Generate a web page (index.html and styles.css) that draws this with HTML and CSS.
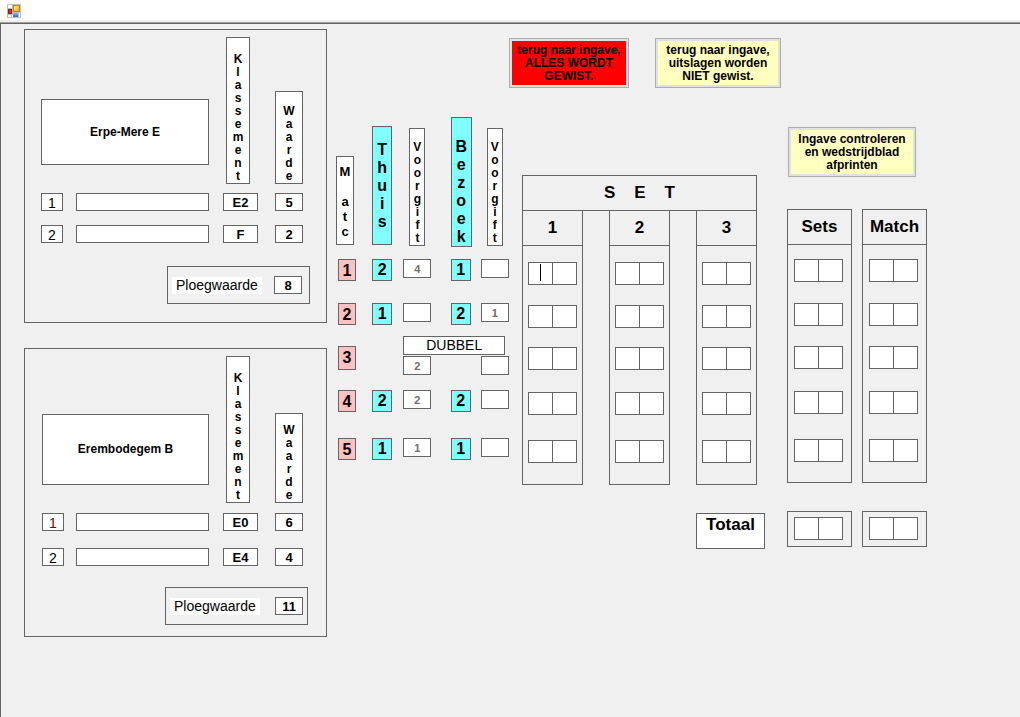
FILE: index.html
```html
<!DOCTYPE html>
<html lang="nl">
<head>
<meta charset="utf-8">
<title>Wedstrijdblad</title>
<link rel="stylesheet" href="styles.css">
</head>
<body>
<header class="titlebar">
  <svg class="app-icon" viewBox="0 0 14 14" width="14" height="14" aria-hidden="true">
    <defs>
      <linearGradient id="gold" x1="0" y1="0" x2="1" y2="1"><stop offset="0" stop-color="#fff0a0"/><stop offset="1" stop-color="#f0a800"/></linearGradient>
      <linearGradient id="blue" x1="0" y1="0" x2="0" y2="1"><stop offset="0" stop-color="#86b4ff"/><stop offset="1" stop-color="#2a62d8"/></linearGradient>
    </defs>
    <rect width="14" height="14" fill="#c0c0c0"/>
    <rect x="1" y="1" width="4" height="3" fill="#fff"/>
    <rect x="1" y="11" width="3" height="2" fill="#fff"/>
    <rect x="5" y="11" width="1" height="2" fill="#fff"/>
    <rect x="12" y="9" width="1" height="4" fill="#fff"/>
    <rect x="6.5" y="1.500" width="6" height="6" fill="url(#gold)" stroke="#b8860b"/>
    <rect x="1.500" y="5.500" width="3" height="4" fill="#e03020" stroke="#a01010"/>
    <rect x="6" y="9" width="5" height="4" fill="url(#blue)"/>
  </svg>
</header>
<main class="form">
  <div class="teams">
    <section class="team team-home">
      <div class="team-grid">
        <div class="team-name">Erpe-Mere E</div>
        <div class="vlabel klassement">K
l
a
s
s
e
m
e
n
t</div>
        <div class="vlabel waarde">W
a
a
r
d
e</div>
        <label class="index" for="h1">1</label><input class="field" id="h1">
        <input class="field rank" aria-label="Klassement 1" value="E2"><input class="field value" aria-label="Waarde 1" value="5">
        <label class="index" for="h2">2</label><input class="field" id="h2">
        <input class="field rank" aria-label="Klassement 2" value="F"><input class="field value" aria-label="Waarde 2" value="2">
      </div>
      <div class="total">
        <label class="total-label" for="ht">Ploegwaarde</label>
        <input class="field value" id="ht" value="8">
      </div>
    </section>
    <section class="team team-away">
      <div class="team-grid">
        <div class="team-name">Erembodegem B</div>
        <div class="vlabel klassement">K
l
a
s
s
e
m
e
n
t</div>
        <div class="vlabel waarde">W
a
a
r
d
e</div>
        <label class="index first" for="a1">1</label><input class="field" id="a1">
        <input class="field rank" aria-label="Klassement 1" value="E0"><input class="field value" aria-label="Waarde 1" value="6">
        <label class="index" for="a2">2</label><input class="field" id="a2">
        <input class="field rank" aria-label="Klassement 2" value="E4"><input class="field value" aria-label="Waarde 2" value="4">
      </div>
      <div class="total">
        <label class="total-label" for="at">Ploegwaarde</label>
        <input class="field value" id="at" value="11">
      </div>
    </section>
  </div>

  <section class="matches">
    <div class="vlabel match">M

a
t
c</div>
    <div class="vlabel side thuis">T
h
u
i
s</div>
    <div class="vlabel voorgift">V
o
o
r
g
i
f
t</div>
    <div class="vlabel side bezoek">B
e
z
o
e
k</div>
    <div class="vlabel voorgift">V
o
o
r
g
i
f
t</div>

    <span class="num">1</span><input class="player" aria-label="Thuis 1" value="2"><input class="gift" aria-label="Voorgift thuis 1" value="4"><input class="player" aria-label="Bezoek 1" value="1"><input class="gift" aria-label="Voorgift bezoek 1">
    <span class="num">2</span><input class="player" aria-label="Thuis 2" value="1"><input class="gift" aria-label="Voorgift thuis 2"><input class="player" aria-label="Bezoek 2" value="2"><input class="gift" aria-label="Voorgift bezoek 2" value="1">
    <span class="num num-double">3</span>
    <div class="double">
      <div class="double-title">DUBBEL</div>
      <div class="double-gifts"><input class="gift" aria-label="Voorgift thuis 3" value="2"><input class="gift" aria-label="Voorgift bezoek 3"></div>
    </div>
    <span class="num">4</span><input class="player" aria-label="Thuis 4" value="2"><input class="gift" aria-label="Voorgift thuis 4" value="2"><input class="player" aria-label="Bezoek 4" value="2"><input class="gift" aria-label="Voorgift bezoek 4">
    <span class="num">5</span><input class="player" aria-label="Thuis 5" value="1"><input class="gift" aria-label="Voorgift thuis 5" value="1"><input class="player" aria-label="Bezoek 5" value="1"><input class="gift" aria-label="Voorgift bezoek 5">
  </section>

  <div class="scores">
    <div class="actions">
      <button class="action danger" type="button">terug naar ingave,<br>ALLES WORDT<br>GEWIST.</button>
      <button class="action" type="button">terug naar ingave,<br>uitslagen worden<br>NIET gewist.</button>
    </div>
    <div class="board">
      <section class="sets">
        <h2 class="sets-title">S&nbsp;&nbsp;&nbsp; E&nbsp;&nbsp;&nbsp; T</h2>
        <div class="sets-columns">
          <div class="column">
            <h3 class="column-head">1</h3>
            <div class="pairs">
              <div class="pair active"><input aria-label="Set 1 thuis"><input aria-label="Set 1 bezoek"></div>
              <div class="pair"><input aria-label="Set 1 thuis"><input aria-label="Set 1 bezoek"></div>
              <div class="pair"><input aria-label="Set 1 thuis"><input aria-label="Set 1 bezoek"></div>
              <div class="pair"><input aria-label="Set 1 thuis"><input aria-label="Set 1 bezoek"></div>
              <div class="pair"><input aria-label="Set 1 thuis"><input aria-label="Set 1 bezoek"></div>
            </div>
          </div>
          <div class="column">
            <h3 class="column-head">2</h3>
            <div class="pairs">
              <div class="pair"><input aria-label="Set 2 thuis"><input aria-label="Set 2 bezoek"></div>
              <div class="pair"><input aria-label="Set 2 thuis"><input aria-label="Set 2 bezoek"></div>
              <div class="pair"><input aria-label="Set 2 thuis"><input aria-label="Set 2 bezoek"></div>
              <div class="pair"><input aria-label="Set 2 thuis"><input aria-label="Set 2 bezoek"></div>
              <div class="pair"><input aria-label="Set 2 thuis"><input aria-label="Set 2 bezoek"></div>
            </div>
          </div>
          <div class="column">
            <h3 class="column-head">3</h3>
            <div class="pairs">
              <div class="pair"><input aria-label="Set 3 thuis"><input aria-label="Set 3 bezoek"></div>
              <div class="pair"><input aria-label="Set 3 thuis"><input aria-label="Set 3 bezoek"></div>
              <div class="pair"><input aria-label="Set 3 thuis"><input aria-label="Set 3 bezoek"></div>
              <div class="pair"><input aria-label="Set 3 thuis"><input aria-label="Set 3 bezoek"></div>
              <div class="pair"><input aria-label="Set 3 thuis"><input aria-label="Set 3 bezoek"></div>
            </div>
          </div>
        </div>
      </section>
      <section class="results">
        <button class="action print" type="button">Ingave controleren<br>en wedstrijdblad<br>afprinten</button>
        <div class="results-columns">
          <div class="column">
            <h3 class="column-head">Sets</h3>
            <div class="pairs">
              <div class="pair"><input aria-label="Sets thuis"><input aria-label="Sets bezoek"></div>
              <div class="pair"><input aria-label="Sets thuis"><input aria-label="Sets bezoek"></div>
              <div class="pair"><input aria-label="Sets thuis"><input aria-label="Sets bezoek"></div>
              <div class="pair"><input aria-label="Sets thuis"><input aria-label="Sets bezoek"></div>
              <div class="pair"><input aria-label="Sets thuis"><input aria-label="Sets bezoek"></div>
            </div>
          </div>
          <div class="column">
            <h3 class="column-head">Match</h3>
            <div class="pairs">
              <div class="pair"><input aria-label="Match thuis"><input aria-label="Match bezoek"></div>
              <div class="pair"><input aria-label="Match thuis"><input aria-label="Match bezoek"></div>
              <div class="pair"><input aria-label="Match thuis"><input aria-label="Match bezoek"></div>
              <div class="pair"><input aria-label="Match thuis"><input aria-label="Match bezoek"></div>
              <div class="pair"><input aria-label="Match thuis"><input aria-label="Match bezoek"></div>
            </div>
          </div>
        </div>
      </section>
    </div>
    <div class="totals">
      <div class="totals-label">Totaal</div>
      <div class="totals-boxes">
        <div class="totals-box"><div class="pair"><input aria-label="Totaal sets thuis"><input aria-label="Totaal sets bezoek"></div></div>
        <div class="totals-box"><div class="pair"><input aria-label="Totaal match thuis"><input aria-label="Totaal match bezoek"></div></div>
      </div>
    </div>
  </div>
</main>
</body>
</html>
```
FILE: styles.css
```css
:root {
  --line: #646464;
  --face: #f0f0f0;
  --cyan: #80ffff;
  --pink: #ffc0c0;
  --cream: #ffffc0;
}

* {
  box-sizing: border-box;
}

body {
  margin: 0;
  min-height: 100vh;
  display: flex;
  flex-direction: column;
  background: var(--face);
  color: #000;
  font: 12px/13px "Liberation Sans", Arial, sans-serif;
}

input,
button {
  font: inherit;
  color: inherit;
  margin: 0;
  padding: 0;
  border-radius: 0;
  min-width: 0;
}

input {
  border: 1px solid var(--line);
  background: #fff;
  text-align: center;
}

h2,
h3 {
  margin: 0;
  font-size: 17px;
  line-height: 34px;
  text-align: center;
}

.titlebar {
  display: flex;
  padding: 4px 7px 2px;
  background: #fff;
}

.app-icon {
  display: block;
}

.form {
  flex: 1;
  display: grid;
  grid-template-columns: 312fr 173fr 418fr;
  align-items: start;
  margin-top: 3px;
  padding: 5px 93px 20px 23px;
  border-top: 1px solid var(--line);
  border-left: 1px solid var(--line);
  box-shadow: 0 -1px 0 #a0a0a0;
}

/* Team panels */
.teams {
  display: grid;
  row-gap: 25px;
  padding-right: 9px;
}

.team {
  border: 1px solid var(--line);
  padding: 7px 16px 18px;
}

.team-away {
  padding-bottom: 11px;
}

.team-grid {
  display: grid;
  grid-template-columns: 22px 1fr 52px 28px;
  grid-template-rows: auto 18px 18px;
  row-gap: 14px;
  padding-right: 7px;
}

.team-away .team-grid {
  row-gap: 17px;
  padding-left: 1px;
}

.team-grid > .index + .field {
  margin: 0 14px 0 13px;
}

.team-away .team-grid > .index + .field {
  margin-left: 12px;
}

.team-name {
  grid-column: 1 / 3;
  align-self: end;
  display: grid;
  place-items: center;
  height: 66px;
  margin: 0 14px 14px 0;
  border: 1px solid var(--line);
  background: #fff;
  font-weight: bold;
}

.team-away .team-name {
  height: 71px;
  margin-bottom: 11px;
}

.team-home .vlabel {
  margin-bottom: -5px;
}

.team-away .vlabel {
  margin-bottom: -7px;
}

.vlabel {
  align-self: end;
  border: 1px solid var(--line);
  background: #fff;
  font-weight: bold;
  text-align: center;
  white-space: pre-line;
}

.klassement {
  width: 24px;
  margin-left: 3px;
  padding-top: 15px;
}

.waarde {
  width: 28px;
  padding-top: 13px;
}

.team-away .waarde {
  padding-top: 10px;
}

.index {
  border: 1px solid var(--line);
  background: #fff;
  font-size: 14px;
  line-height: 18px;
  text-align: center;
}

.index.first {
  color: #800000;
}

.field {
  height: 18px;
  font-size: 13px;
}

.rank,
.value {
  font-weight: bold;
}

.rank {
  width: 35px;
}

.value {
  width: 28px;
}

.total {
  display: flex;
  align-items: center;
  justify-content: space-between;
  width: 143px;
  height: 38px;
  margin: 23px 0 0 auto;
  padding: 0 7px 0 4px;
  border: 1px solid var(--line);
}

.team-away .total {
  margin: 21px 2px 0 auto;
  padding-right: 4px;
}

.total-label {
  padding: 0 4px;
  background: #fff;
  font-size: 14px;
  line-height: 17px;
}

/* Match table */
.matches {
  display: grid;
  grid-template-columns: 36fr 31fr 47fr 30fr 28fr;
  grid-template-rows: 142px 44px 33px 54px 48px 24px;
  align-items: start;
  padding-top: 88px;
}

.matches > .vlabel {
  align-self: start;
}

.match {
  width: 18px;
  margin-top: 39px;
  padding: 7px 0 5px;
  font-size: 13px;
  line-height: 15px;
}

.side {
  background: var(--cyan);
  font-size: 16px;
  line-height: 18px;
}

.thuis {
  width: 20px;
  margin-top: 9px;
  padding: 14px 0 13px;
}

.bezoek {
  width: 21px;
  padding-top: 20px;
}

.voorgift {
  width: 16px;
  margin: 11px 0 0 6px;
  padding-top: 12px;
}

.num,
.player {
  width: 20px;
  height: 22px;
  border: 1px solid var(--line);
  font-size: 16px;
  font-weight: bold;
  line-height: 22px;
  text-align: center;
}

.num {
  width: 18px;
  margin-left: 2px;
  background: var(--pink);
}

.num-double {
  height: 24px;
  margin-top: 10px;
}

.player {
  background: var(--cyan);
}

.gift {
  width: 28px;
  height: 19px;
  color: #6d6d6d;
  font-size: 11px;
  font-weight: bold;
}

.double {
  grid-column: 3 / 6;
}

.double-title {
  margin-right: 4px;
  border: 1px solid var(--line);
  background: #fff;
  font-size: 14px;
  line-height: 17px;
  text-align: center;
}

.double-gifts {
  display: flex;
  justify-content: space-between;
  padding-top: 1px;
}

/* Actions */
.scores {
  padding-top: 9px;
}

.actions {
  display: flex;
  gap: 26px;
}

.action {
  width: 126px;
  height: 50px;
  border: 1px solid #adadad;
  background: var(--cream);
  box-shadow: inset 0 0 0 2px #e1e1e1;
  font-weight: bold;
  white-space: nowrap;
}

.danger {
  width: 120px;
  background: #f00;
}

.print {
  display: block;
  width: 128px;
  margin: 0 0 32px 1px;
}

/* Score board */
.board {
  display: grid;
  grid-template-columns: 235fr 140fr;
  column-gap: 30px;
  align-items: start;
  padding: 39px 0 0 13px;
}

.sets {
  margin-top: 48px;
}

.sets-title {
  border: 1px solid var(--line);
}

.sets-columns,
.results-columns {
  display: grid;
  grid-template-columns: repeat(3, 1fr);
  column-gap: 26px;
}

.results-columns {
  grid-template-columns: repeat(2, 1fr);
  column-gap: 10px;
}

.column {
  border: 1px solid var(--line);
}

.sets .column {
  border-top: 0;
}

.column-head {
  border-bottom: 1px solid var(--line);
}

.pairs {
  display: grid;
  grid-template-rows: 43px 42px 45px 48px 23px;
  align-items: start;
  justify-content: center;
  padding: 16px 0 21px;
}

.results .pairs {
  grid-template-rows: 44px 43px 45px 48px 23px;
  justify-content: start;
  padding: 14px 0 20px 6px;
}

.pair {
  position: relative;
  display: flex;
}

.pair input {
  width: 25px;
  height: 23px;
}

.pair input + input {
  margin-left: -1px;
}

/* Text cursor in the field being edited */
.active::after {
  content: "";
  position: absolute;
  top: 2px;
  left: 12px;
  width: 1px;
  height: 17px;
  background: #000;
}

.totals {
  display: flex;
  justify-content: flex-end;
  gap: 22px;
  padding-top: 26px;
}

.totals-label {
  width: 69px;
  height: 36px;
  margin-top: 2px;
  border: 1px solid var(--line);
  background: #fff;
  font-size: 17px;
  font-weight: bold;
  line-height: 22px;
  text-align: center;
}

.totals-boxes {
  display: flex;
  gap: 10px;
}

.totals-box {
  width: 65px;
  height: 36px;
  padding: 5px 6px;
  border: 1px solid var(--line);
}
```
